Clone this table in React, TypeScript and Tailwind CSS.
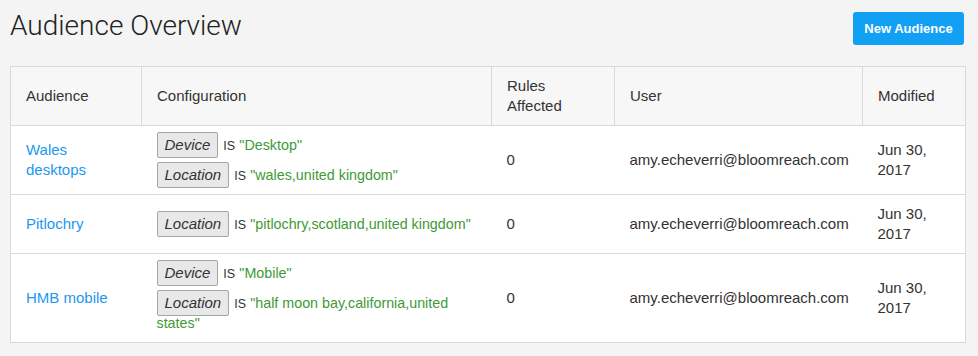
import React from "react";

const Tag = ({ label }: { label: string }) => (
  <span className="inline-block -my-[3px] border border-[#a6a6a6] bg-[#e8e8e8] rounded-[2px] px-[7px] py-[2px] italic text-[#333] leading-[20px]">
    {label}
  </span>
);

const Rule = ({ label, value }: { label: string; value: string }) => (
  <div className="leading-[20px]">
    <Tag label={label} />
    <span className="ml-[5px] text-[12.5px] leading-[14px] text-[#333]">IS</span>{" "}
    <span className="text-[#3e9a34] text-[14.3px] leading-[16px]">"{value}"</span>
  </div>
);

const rows = [
  {
    name: ["Wales", "desktops"],
    rules: [
      { label: "Device", value: "Desktop" },
      { label: "Location", value: "wales,united kingdom" },
    ],
  },
  {
    name: ["Pitlochry"],
    rules: [{ label: "Location", value: "pitlochry,scotland,united kingdom" }],
  },
  {
    name: ["HMB mobile"],
    rules: [
      { label: "Device", value: "Mobile" },
      { label: "Location", value: "half moon bay,california,united states" },
    ],
  },
];

export default function App() {
  return (
    <div
      className="min-h-screen bg-[#f4f4f4] text-[#333] text-[15px]"
      style={{ fontFamily: '"Liberation Sans", Arial, sans-serif' }}
    >
      <div className="flex justify-between items-start h-[66px] pl-[10px] pr-[14px]">
        <h1
          className="text-[28px] font-light text-[#222] leading-none mt-[12px]"
          style={{ fontFamily: "Roboto, sans-serif" }}
        >
          Audience Overview
        </h1>
        <button className="mt-[12px] h-[33px] w-[111px] rounded-[3px] bg-[#11a0f3] text-white text-[13px] font-bold">
          New Audience
        </button>
      </div>
      <div className="pl-[10px]">
        <table className="w-[955px] table-fixed border-collapse border border-[#d9d9d9] bg-white leading-[20px]">
          <colgroup>
            <col className="w-[131px]" />
            <col className="w-[350px]" />
            <col className="w-[123px]" />
            <col className="w-[248px]" />
            <col className="w-[103px]" />
          </colgroup>
          <thead>
            <tr className="bg-[#f7f7f7]">
              {["Audience", "Configuration", "Rules Affected", "User", "Modified"].map((h) => (
                <th
                  key={h}
                  className="border border-[#d9d9d9] px-[15px] py-[9px] text-left font-normal align-middle"
                >
                  {h}
                </th>
              ))}
            </tr>
          </thead>
          <tbody>
            {rows.map((r, i) => (
              <tr key={i} className="border-t border-[#d9d9d9]">
                <td className="px-[15px] py-[9px] align-middle text-[#1b98ef]">
                  {r.name.map((n) => (
                    <div key={n}>{n}</div>
                  ))}
                </td>
                <td className="px-[15px] py-[9px] align-middle">
                  <div className="flex flex-col gap-[10px]">
                    {r.rules.map((rule) => (
                      <Rule key={rule.label} {...rule} />
                    ))}
                  </div>
                </td>
                <td className="px-[15px] py-[9px] align-middle">0</td>
                <td className="px-[15px] py-[9px] align-middle">amy.echeverri@bloomreach.com</td>
                <td className="px-[15px] py-[9px] align-middle">
                  Jun 30,
                  <br />
                  2017
                </td>
              </tr>
            ))}
          </tbody>
        </table>
      </div>
    </div>
  );
}
